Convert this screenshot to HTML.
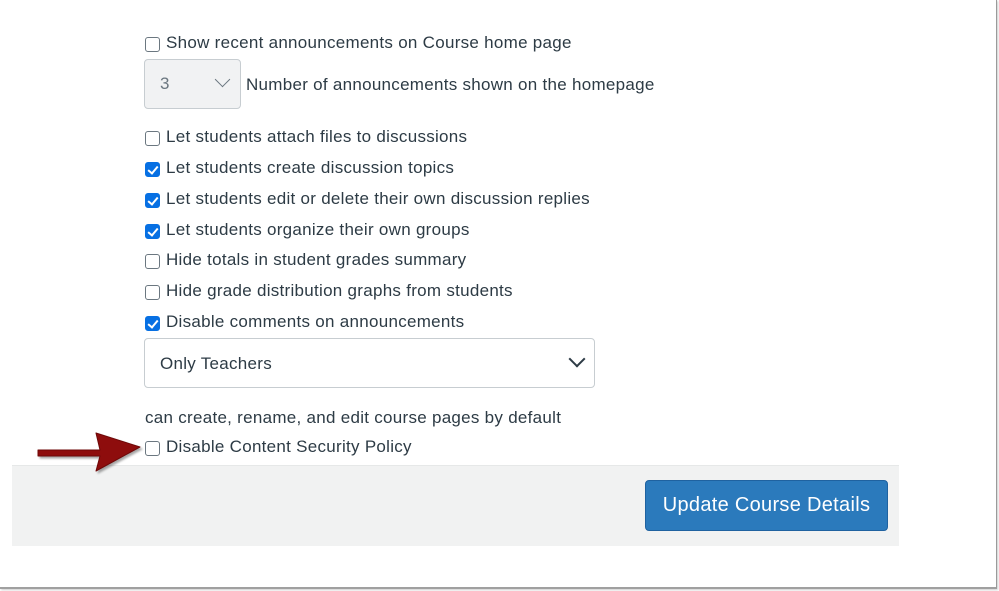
<!DOCTYPE html>
<html><head><style>
body{margin:0;width:999px;height:591px;background:#fff;position:relative;overflow:hidden;font-family:"Liberation Sans",sans-serif;color:#2d3b45}
.frame{position:absolute;left:0;top:0;width:996px;height:587px;border-right:1px solid #9a9a9a;border-bottom:2px solid #a0a0a0;box-shadow:1px 1px 2px rgba(0,0,0,.2)}
.row{position:absolute;left:145px;font-size:17px;line-height:20px;white-space:nowrap;letter-spacing:.28px}
.cb{display:inline-block;width:13px;height:13px;border:1px solid #6b7780;border-radius:3px;vertical-align:-4px;margin-right:6px;background:#fff;position:relative}
.cb.on{background:#0770e3;border-color:#0770e3}
.cb.on:after{content:"";position:absolute;left:4px;top:1px;width:4px;height:8px;border:solid #fff;border-width:0 2px 2px 0;transform:rotate(40deg)}
.sel{position:absolute;border:1px solid #c7cdd1;border-radius:4px;font-size:17px;letter-spacing:.28px}
.chev{position:absolute;width:10px;height:10px;border:solid #2d3b45;border-width:0 2px 2px 0;transform:rotate(45deg)}
</style></head><body>
<div class="frame"></div>
<div class="row" style="top:33px"><span class="cb"></span>Show recent announcements on Course home page</div>
<div class="sel" style="left:144px;top:59px;width:95px;height:48px;background:#f1f2f3;color:#6b7780"><span style="position:absolute;left:15px;top:14px">3</span><div class="chev" style="left:72px;top:14px;border-color:#6b7780;border-width:0 1.5px 1.5px 0"></div></div>
<div class="row" style="left:246px;top:75px">Number of announcements shown on the homepage</div>
<div class="row" style="top:127px"><span class="cb"></span>Let students attach files to discussions</div>
<div class="row" style="top:158px"><span class="cb on"></span>Let students create discussion topics</div>
<div class="row" style="top:189px"><span class="cb on"></span>Let students edit or delete their own discussion replies</div>
<div class="row" style="top:220px"><span class="cb on"></span>Let students organize their own groups</div>
<div class="row" style="top:250px"><span class="cb"></span>Hide totals in student grades summary</div>
<div class="row" style="top:281px"><span class="cb"></span>Hide grade distribution graphs from students</div>
<div class="row" style="top:312px"><span class="cb on"></span>Disable comments on announcements</div>
<div class="sel" style="left:144px;top:338px;width:449px;height:48px;background:#fff"><span style="position:absolute;left:15px;top:15px">Only Teachers</span><div class="chev" style="left:426px;top:14px"></div></div>
<div class="row" style="top:408px">can create, rename, and edit course pages by default</div>
<div class="row" style="top:437px"><span class="cb"></span>Disable Content Security Policy</div>
<div style="position:absolute;left:12px;top:465px;width:887px;height:80px;background:#f1f2f2;border-top:1px solid #e6e8e8"></div>
<div style="position:absolute;left:645px;top:480px;width:241px;height:49px;background:#2b7abc;border:1px solid #1f62a0;border-radius:4px;color:#fff;font-size:20px;line-height:49px;text-align:center;letter-spacing:.3px">Update Course Details</div>
<svg style="position:absolute;left:30px;top:428px" width="115" height="50"><path d="M8 22 L70 22 L66 5 L110 19 L66 43 L70 28 L8 28 Z" fill="#8e0d0d" stroke="#6e0808" stroke-width="1" stroke-linejoin="round" style="filter:drop-shadow(2px 2px 1px rgba(0,0,0,.35))"/></svg>
</body></html>
